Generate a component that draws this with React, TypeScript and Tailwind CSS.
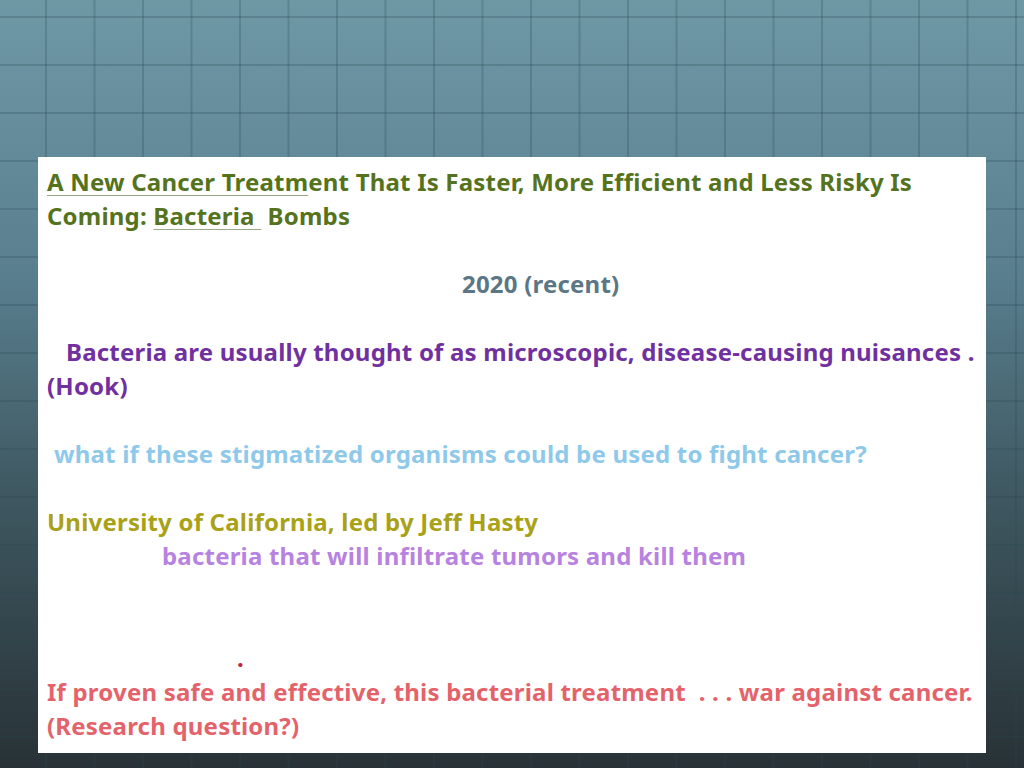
export default function App() {
  return (
    <div className="relative h-[768px] w-[1024px] overflow-hidden bg-[linear-gradient(180deg,#6f98a5_0%,#5a8090_35%,#3e5760_65%,#283236_100%)] font-['Lato',sans-serif]">
      <div className="absolute inset-0 bg-[linear-gradient(90deg,rgba(40,70,80,0.25)_2px,transparent_2px),linear-gradient(180deg,rgba(40,70,80,0.25)_2px,transparent_2px)] bg-[length:48.5px_48px] bg-[position:45px_16px]" />
      <div className="absolute left-[38px] top-[157px] h-[596px] w-[948px] bg-white px-[9px] pt-[8px] text-[24px] font-bold leading-[34px] tracking-[0.2px]">
        <div className="text-[#55731d]">
          <span className="underline decoration-1 underline-offset-4 decoration-[#9aa88a]">A New Cancer Treatm</span>ent That Is Faster, More Efficient and Less Risky Is
          <br />
          Coming: <span className="underline decoration-1 underline-offset-4 decoration-[#9aa88a]">Bacteria&nbsp;</span> Bombs
        </div>
        <div className="mt-[34px] pl-[415px] text-[#5b7785]">2020 (recent)</div>
        <div className="mt-[34px] text-[#7030a0]">
          <span className="pl-[19px]">Bacteria are usually thought of as microscopic, disease-causing nuisances .</span>
          <br />
          (Hook)
        </div>
        <div className="mt-[34px] pl-[7px] text-[#8ec9ea]">what if these stigmatized organisms could be used to fight cancer?</div>
        <div className="mt-[34px] text-[#a9a218]">University of California, led by Jeff Hasty</div>
        <div className="pl-[115px] text-[#b883e0]">bacteria that will infiltrate tumors and kill them</div>
        <div className="mt-[68px] pl-[190px] text-[#c0203a] leading-[34px]">.</div>
        <div className="text-[#e4636a]">
          If proven safe and effective, this bacterial treatment &nbsp;. . . war against cancer.
          <br />
          (Research question?)
        </div>
      </div>
    </div>
  )
}
